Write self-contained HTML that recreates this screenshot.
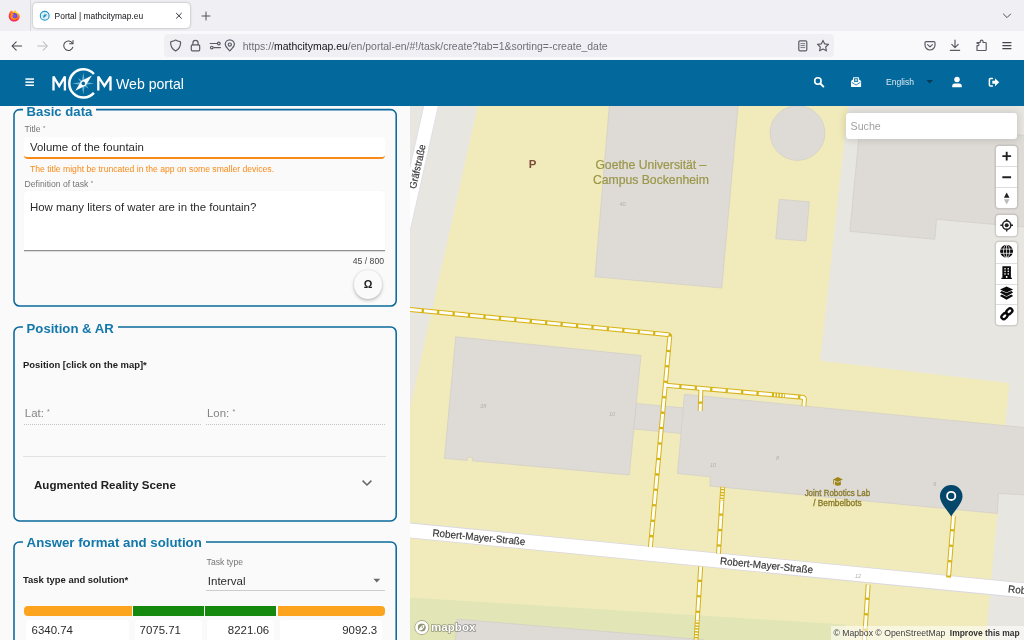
<!DOCTYPE html>
<html>
<head>
<meta charset="utf-8">
<title>Portal | mathcitymap.eu</title>
<style>
*{box-sizing:border-box;margin:0;padding:0}
html,body{width:1024px;height:640px;overflow:hidden;background:#fafafa;font-family:"Liberation Sans",sans-serif;color:#222}
.abs{position:absolute}
#tabbar{position:absolute;left:0;top:0;width:1024px;height:31px;background:#f0f0f4}
#tab{position:absolute;left:33px;top:3px;width:157.4px;height:25.1px;background:#fff;border-radius:4px;box-shadow:0 0 2.5px rgba(0,0,0,.35)}
#tabsep{position:absolute;left:30px;top:0;width:1px;height:31px;background:#d9d9de}
#tabtitle{position:absolute;left:54.6px;top:11px;font-size:8.45px;line-height:10px;color:#15141a;white-space:nowrap}
#toolbar{position:absolute;left:0;top:31px;width:1024px;height:29px;background:#f9f9fb}
#urlbar{position:absolute;left:164px;top:34px;width:670px;height:23px;background:#f0f0f4;border-radius:4px}
#urltext{position:absolute;left:242.7px;top:40.9px;font-size:10.46px;line-height:12px;color:#6f6f78;white-space:nowrap}
#urltext b{font-weight:normal;color:#15141a}
#header{position:absolute;left:0;top:60px;width:1024px;height:45.5px;background:#03699d}
#webportal{position:absolute;left:116px;top:75.8px;font-size:14.1px;line-height:17px;color:#fff;white-space:nowrap}
#english{position:absolute;left:886px;top:77px;font-size:8.55px;line-height:10px;color:#d9e8f0}
#panel{position:absolute;left:0;top:105.5px;width:410px;height:534.5px;background:#fafafa;overflow:hidden}
#map{position:absolute;left:409.5px;top:105.5px;width:614.5px;height:534.5px;background:#e8e6e1;overflow:hidden}
.fs{position:absolute;border:1.6px solid #0b6a9c;border-radius:6px}
.lg{position:absolute;background:#fafafa;color:#1277a9;font-weight:bold;font-size:13.15px;line-height:16px;white-space:nowrap;padding:0 4px}
.lbl{position:absolute;font-size:8.65px;line-height:10px;color:#757575;white-space:nowrap}
.blbl{position:absolute;font-size:9.45px;line-height:11px;font-weight:bold;color:#212121;white-space:nowrap}
.inp{position:absolute;font-size:11.45px;line-height:14px;color:#2b2b2b;white-space:nowrap}
.ctrl{position:absolute;background:#fff;border-radius:3px;box-shadow:0 0 0 1.5px rgba(0,0,0,.1)}
</style>
</head>
<body>
<div id="root" style="position:absolute;left:0;top:0;width:1024px;height:640px;will-change:transform">
<!-- ===== browser chrome ===== -->
<div id="tabbar"></div>
<div id="tabsep"></div>
<div id="tab"></div>
<div id="tabtitle">Portal | mathcitymap.eu</div>
<div id="toolbar"></div>
<div id="urlbar"></div>
<div id="urltext">https://<b>mathcitymap.eu</b>/en/portal-en/#!/task/create?tab=1&amp;sorting=-create_date</div>
<svg class="abs" style="left:0;top:0" width="1024" height="60" viewBox="0 0 1024 60" fill="none" stroke="#5b5b66" stroke-width="1.2" stroke-linecap="round" stroke-linejoin="round">
<!-- firefox logo -->
<defs>
<radialGradient id="ffg" cx="0.7" cy="0.15" r="1"><stop offset="0" stop-color="#ffe226"/><stop offset=".35" stop-color="#ff9a1f"/><stop offset=".7" stop-color="#ff3647"/><stop offset="1" stop-color="#e31587"/></radialGradient>
<radialGradient id="ffp" cx="0.5" cy="0.5" r="0.5"><stop offset="0" stop-color="#9059ff"/><stop offset="1" stop-color="#5b3bd6"/></radialGradient>
</defs>
<g stroke="none">
<path d="M9.2,13.6 C9.6,11.6 10.9,10.6 12,10.4 C12.2,11 12.6,11.5 13.2,11.9 C13.8,10.9 15,10 16.2,10.6 C15.8,11.2 16.2,11.8 16.8,12.2 C18.8,13 19.9,14.8 19.8,16.6 C19.6,19.6 17.2,21.6 14.3,21.6 C11.2,21.6 8.7,19.2 8.7,16.2 C8.7,15.2 8.9,14.4 9.2,13.6 Z" fill="url(#ffg)"/>
<circle cx="14.5" cy="16" r="2.9" fill="url(#ffp)"/>
<path d="M11.2,14.2 C12.2,13.6 13.6,13.8 14.4,14.6 C13.4,14.6 12.6,15.2 12.6,16.2 C12.6,17.4 13.6,18.2 14.8,18.2 C16,18.2 17,17.4 17.2,16.4 C17.4,18.6 15.8,20 14.2,20 C12,20 10.4,18.4 10.4,16.4 C10.4,15.6 10.7,14.8 11.2,14.2 Z" fill="#ff980e" opacity=".9"/>
</g>
<!-- tab favicon -->
<circle cx="44.7" cy="15.8" r="4.4" stroke="#2196c4" stroke-width="1.1" fill="#e3f3f9"/>
<path d="M44.7,12.4 L45.3,15.2 L48.1,15.8 L45.3,16.4 L44.7,19.2 L44.1,16.4 L41.3,15.8 L44.1,15.2 Z" fill="#8fcfe6" stroke="none"/>
<path d="M42.6,17.9 L44,15.1 L46.8,13.7 L45.4,16.5 Z" fill="#1b8fc0" stroke="none"/>
<!-- tab close -->
<path d="M176.4,13.3 L181.4,18.3 M181.4,13.3 L176.4,18.3" stroke="#2b2a33" stroke-width=".95"/>
<!-- new tab + -->
<path d="M202,16 L210,16 M206,12 L206,20" stroke="#4a4a55" stroke-width=".95"/>
<!-- list all tabs chevron -->
<path d="M1003.4,14 L1007,17.6 L1010.6,14" stroke="#4a4a55" stroke-width="1"/>
<!-- back -->
<path d="M21.6,46 L12.2,46 M16.2,41.8 L12,46 L16.2,50.2" stroke="#45454f" stroke-width="1.05"/>
<!-- forward (disabled) -->
<path d="M37.8,46 L47.2,46 M43.2,41.8 L47.4,46 L43.2,50.2" stroke="#bdbdc4" stroke-width="1.05"/>
<!-- reload -->
<path d="M72.4,43.2 A4.7,4.7 0 1 0 72.9,47.2" stroke="#45454f" stroke-width="1.05"/>
<path d="M73,40.4 L73,43.8 L69.6,43.8" stroke="#45454f" stroke-width="1.05" fill="none"/>
<!-- shield -->
<path d="M175.6,40.1 C174.2,41 172.6,41.5 171.2,41.7 Q170.6,41.8 170.6,42.5 C170.6,46.6 172.2,49.3 175.6,50.9 C179,49.3 180.6,46.6 180.6,42.5 Q180.6,41.8 180,41.7 C178.6,41.5 177,41 175.6,40.1 Z"/>
<!-- lock -->
<rect x="191.3" y="44.9" width="8.4" height="5.9" rx="1"/>
<path d="M192.9,44.8 L192.9,43 A2.6,2.6 0 0 1 198.1,43 L198.1,44.8"/>
<!-- permissions -->
<path d="M210.2,43.5 L216.8,43.5 M213.8,47.6 L220.4,47.6"/>
<circle cx="218.8" cy="43.5" r="1.35"/>
<circle cx="211.8" cy="47.6" r="1.35"/>
<!-- location -->
<path d="M229.8,50.9 C227.6,48.2 225.2,46.4 225.2,44.4 A4.6,4.6 0 0 1 234.4,44.4 C234.4,46.4 232,48.2 229.8,50.9 Z"/>
<circle cx="229.8" cy="44.6" r="1.6"/>
<!-- reader -->
<rect x="798.8" y="40.9" width="8" height="10" rx="1.2"/>
<path d="M800.8,43.6 L804.8,43.6 M800.8,45.6 L804.8,45.6 M800.8,47.6 L804.8,47.6" stroke-width=".8"/>
<!-- star -->
<path d="M823,40.4 L824.7,43.9 L828.5,44.4 L825.7,47 L826.4,50.8 L823,49 L819.6,50.8 L820.3,47 L817.5,44.4 L821.3,43.9 Z"/>
<!-- pocket -->
<path d="M926.2,41.6 L933.8,41.6 Q935,41.6 935,42.8 L935,45 A5,5 0 0 1 925,45 L925,42.8 Q925,41.6 926.2,41.6 Z"/>
<path d="M927.6,44.6 L930,46.9 L932.4,44.6"/>
<!-- download -->
<path d="M955,40 L955,47.4 M951.8,44.4 L955,47.6 L958.2,44.4 M950.4,50.4 L959.6,50.4"/>
<!-- extension -->
<path d="M977,50.8 L977,46 L978.2,46 A1.3,1.3 0 0 0 978.2,43.6 L977,43.6 L977,42.8 L980.2,42.8 L980.2,41.8 A1.4,1.4 0 0 1 983,41.8 L983,42.8 L985.4,42.8 Q986.2,42.8 986.2,43.6 L986.2,50 Q986.2,50.8 985.4,50.8 Z" transform="translate(0,-.3)"/>
<!-- menu -->
<path d="M1002.8,42.6 L1011,42.6 M1002.8,45.6 L1011,45.6 M1002.8,48.6 L1011,48.6" stroke="#45454f"/>
</svg>

<!-- ===== app header ===== -->
<div id="header"></div>
<div id="webportal">Web portal</div>
<div id="english">English</div>
<svg class="abs" style="left:0;top:60px" width="1024" height="46" viewBox="0 60 1024 46" fill="#fff">
<!-- hamburger -->
<rect x="25.4" y="78.3" width="8.6" height="1.5"/><rect x="25.4" y="81.4" width="8.6" height="1.5"/><rect x="25.4" y="84.5" width="8.6" height="1.5"/>
<!-- MCM logo -->
<g fill="none" stroke="#fff">
<path d="M53.5,90.4 L53.5,76.6 L59.2,86 L64.9,76.6 L64.9,90.4" stroke-width="2.3" stroke-linejoin="miter" stroke-miterlimit="2.2"/>
<path d="M98.3,90.4 L98.3,76.6 L104.4,86 L110.5,76.6 L110.5,90.4" stroke-width="2.3" stroke-linejoin="miter" stroke-miterlimit="2.2"/>
<path d="M93.9,74 A14.1,14.1 0 1 0 93.9,92.8" stroke-width="2.5"/>
</g>
<!-- compass star -->
<g transform="translate(83.3,83.4)">
<g fill="#63b3d6">
<polygon points="0,-11 1.5,-1.5 11,0 1.5,1.5 0,11 -1.5,1.5 -11,0 -1.5,-1.5"/>
<polygon points="5.4,-5.4 2,0 5.4,5.4 0,2 -5.4,5.4 -2,0 -5.4,-5.4 0,-2"/>
</g>
<polygon points="-8,7.4 -2,-2.4 8.6,-8 2.4,2" fill="#fff"/>
<circle r="1.8" fill="#03699d"/>
</g>
<!-- search -->
<circle cx="817.9" cy="81" r="3.2" fill="none" stroke="#fff" stroke-width="1.6"/>
<path d="M820.3,83.5 L823.4,86.6" stroke="#fff" stroke-width="1.9" stroke-linecap="round"/>
<!-- envelope-open-text -->
<path d="M851,81 L853,79.4 L853,78 Q853,77.2 853.8,77.2 L858.3,77.2 Q859.1,77.2 859.1,78 L859.1,79.4 L861.1,81 L861.1,86.2 Q861.1,87.1 860.2,87.1 L851.9,87.1 Q851,87.1 851,86.2 Z" fill="#fff"/>
<rect x="854" y="78.3" width="4.1" height="3.6" fill="#03699d"/>
<path d="M851.6,82.2 L856.05,85 L860.5,82.2" fill="none" stroke="#03699d" stroke-width=".8"/>
<rect x="854.7" y="79" width="2.7" height="2.2" fill="#9cc6dc"/>
<!-- dropdown arrow -->
<path d="M926.4,80 L933,80 L929.7,83.4 Z" fill="#063a59"/>
<!-- user -->
<circle cx="957" cy="79.6" r="2.75"/>
<path d="M952.2,87.2 L952.2,86 Q952.2,83.4 954.8,83.4 L959.2,83.4 Q961.8,83.4 961.8,86 L961.8,87.2 Z"/>
<!-- sign out -->
<path d="M992.4,78.6 L990.4,78.6 Q989.4,78.6 989.4,79.6 L989.4,84.9 Q989.4,85.9 990.4,85.9 L992.4,85.9" fill="none" stroke="#fff" stroke-width="1.5" stroke-linecap="round"/>
<path d="M992.3,80.7 L995,80.7 L995,78.3 L999.2,82.25 L995,86.2 L995,83.8 L992.3,83.8 Z"/>
</svg>

<!-- ===== left panel ===== -->
<div id="panel">
<div class="abs" style="left:0;top:-105.5px;width:410px;height:640px">
<!-- fieldset borders -->
<svg class="abs" style="left:0;top:0" width="410" height="640" viewBox="0 0 410 640" fill="none" stroke="#0b6a9c" stroke-width="1.55">
<rect x="14" y="109.6" width="382.2" height="196.4" rx="5.5"/>
<rect x="14" y="327" width="382.2" height="193.9" rx="5.5"/>
<rect x="14" y="541.9" width="382.2" height="140" rx="5.5"/>
</svg>
<!-- fieldset 1 -->
<div class="lg" style="left:22.6px;top:103.6px">Basic data</div>
<div class="lbl" style="left:24.6px;top:124.3px">Title <span style="font-size:6px;position:relative;top:-2px">*</span></div>
<div class="abs" style="left:24px;top:137px;width:361px;height:21.6px;background:#fff;border-bottom:2px solid #fa8a17;border-radius:3px 3px 4px 4px"></div>
<div class="inp" style="left:30px;top:140.2px">Volume of the fountain</div>
<div class="abs" style="left:30px;top:163.7px;font-size:8.62px;line-height:10px;color:#fa8a17;white-space:nowrap">The title might be truncated in the app on some smaller devices.</div>
<div class="lbl" style="left:24.6px;top:178.8px">Definition of task <span style="font-size:6px;position:relative;top:-2px">*</span></div>
<div class="abs" style="left:24px;top:191px;width:361px;height:59.5px;background:#fff;border-bottom:1px solid #8f8f8f;border-radius:3px 3px 0 0;box-shadow:0 .6px .8px rgba(0,0,0,.12)"></div>
<div class="inp" style="left:30px;top:200px">How many liters of water are in the fountain?</div>
<div class="abs" style="right:26px;top:256px;font-size:8.65px;line-height:10px;color:#444;white-space:nowrap">45 / 800</div>
<div class="abs" style="left:353.6px;top:270px;width:28.8px;height:28.8px;border-radius:50%;background:#fafafa;box-shadow:0 1.6px 3.6px rgba(0,0,0,.26),0 0 1.5px rgba(0,0,0,.12)"></div>
<div class="abs" style="left:353.6px;top:278.2px;width:28.8px;text-align:center;font-size:10.8px;line-height:12px;font-weight:bold;color:#222">Ω</div>
<!-- fieldset 2 -->
<div class="lg" style="left:22.6px;top:320.9px">Position &amp; AR</div>
<div class="blbl" style="left:23px;top:358.9px">Position [click on the map]*</div>
<div class="abs" style="left:24.8px;top:405.8px;font-size:11.45px;line-height:14px;color:#858585;white-space:nowrap">Lat: <span style="font-size:7px;position:relative;top:-2.5px">*</span></div>
<div class="abs" style="left:207px;top:405.8px;font-size:11.45px;line-height:14px;color:#858585;white-space:nowrap">Lon: <span style="font-size:7px;position:relative;top:-2.5px">*</span></div>
<div class="abs" style="left:24px;top:423.6px;width:177px;height:0;border-top:1px dotted #c6c6c6"></div>
<div class="abs" style="left:206px;top:423.6px;width:178.5px;height:0;border-top:1px dotted #c6c6c6"></div>
<div class="abs" style="left:23px;top:455.6px;width:363px;height:1px;background:#e2e2e2"></div>
<div class="abs" style="left:34px;top:478px;font-size:11.56px;line-height:14px;font-weight:bold;color:#212121;white-space:nowrap">Augmented Reality Scene</div>
<svg class="abs" style="left:360px;top:477px" width="14" height="12" viewBox="0 0 14 12"><path d="M2.6,3.6 L7,8 L11.4,3.6" fill="none" stroke="#666" stroke-width="1.5"/></svg>
<!-- fieldset 3 -->
<div class="lg" style="left:22.6px;top:534.9px;font-size:13.25px">Answer format and solution</div>
<div class="lbl" style="left:206.6px;top:557.2px">Task type</div>
<div class="blbl" style="left:23px;top:574.4px">Task type and solution*</div>
<div class="abs" style="left:207.8px;top:574.4px;font-size:11.5px;line-height:14px;color:#2b2b2b">Interval</div>
<svg class="abs" style="left:371px;top:577px" width="12" height="8" viewBox="0 0 12 8"><path d="M2.4,1.8 L9.2,1.8 L5.8,5.4 Z" fill="#6a6a6a"/></svg>
<div class="abs" style="left:206px;top:590px;width:179px;height:1px;background:#cdcdcd"></div>
<!-- interval bar -->
<div class="abs" style="left:24px;top:606.4px;width:107.6px;height:10px;background:#fda41e;border-radius:4px 0 0 4px"></div>
<div class="abs" style="left:133px;top:606.4px;width:70.6px;height:10px;background:#15880e"></div>
<div class="abs" style="left:205.2px;top:606.4px;width:71px;height:10px;background:#15880e"></div>
<div class="abs" style="left:277.8px;top:606.4px;width:107.4px;height:10px;background:#fda41e;border-radius:0 4px 4px 0"></div>
<div class="abs" style="left:26px;top:620px;width:103px;height:22px;background:#fff;border-radius:3px 3px 0 0"></div>
<div class="abs" style="left:135px;top:620px;width:66.5px;height:22px;background:#fff;border-radius:3px 3px 0 0"></div>
<div class="abs" style="left:207px;top:620px;width:67px;height:22px;background:#fff;border-radius:3px 3px 0 0"></div>
<div class="abs" style="left:280px;top:620px;width:101.5px;height:22px;background:#fff;border-radius:3px 3px 0 0"></div>
<div class="inp" style="left:31.6px;top:623.4px">6340.74</div>
<div class="inp" style="left:139.6px;top:623.4px">7075.71</div>
<div class="inp" style="right:140.8px;top:623.4px">8221.06</div>
<div class="inp" style="right:32.8px;top:623.4px">9092.3</div>
</div>

</div>
<!-- ===== map ===== -->
<div id="map">
<svg class="abs" style="left:0;top:0" width="614.5" height="534.5" viewBox="409.5 105.5 614.5 534.5" font-family="Liberation Sans, sans-serif">
<defs>
<style>
.bld{fill:#dedbd7;stroke:#d0cdc9;stroke-width:.7}
.pc{fill:none;stroke:#d6b317;stroke-width:4.9;stroke-linejoin:round;stroke-linecap:butt}
.pd{fill:none;stroke:#fffef6;stroke-width:2.9;stroke-dasharray:13.2 2.3;stroke-linejoin:round}
.ps{fill:none;stroke:#fffef6;stroke-width:3;stroke-dasharray:1.4 1.5}
.hn{font-size:5.6px;font-style:italic;fill:#b3b0ac;text-anchor:middle}
.rlh{font-size:10.2px;fill:#fff;stroke:#fff;stroke-width:1.8;stroke-linejoin:round}
.rl{font-size:10.2px;fill:#383838;stroke:#383838;stroke-width:.18}
.poi{fill:#897a28;text-anchor:middle;font-size:8.8px;stroke:#897a28;stroke-width:.32}
.uni{fill:#9a9648;text-anchor:middle;font-size:12.4px;stroke:#9a9648;stroke-width:.2}
</style>
</defs>
<!-- land -->
<rect x="409" y="105" width="615" height="535" fill="#e8e6e1"/>
<!-- campus (yellow) -->
<polygon points="477.3,105 847.6,105 819.7,360.3 1008.8,382.4 985.2,640 409,640 409,410" fill="#f1ebbb"/>
<!-- green -->
<polygon points="409,597 845.5,624 844,640 409,640" fill="#e2e6b6"/>
<!-- Graefstrasse -->
<polygon points="423.4,105 437.9,105 409,233 409,169" fill="#fff" stroke="#dcdbe6" stroke-width=".8"/>
<!-- buildings -->
<polygon class="bld" points="608.8,105 737.6,105 721.3,287.5 594.5,276.3"/>
<circle class="bld" cx="797" cy="132.5" r="27.4"/>
<polygon class="bld" points="778.8,198.8 808.8,201.3 805.5,240.5 775.3,238.3"/>
<polygon class="bld" points="860,120 1024,135 1024,226.5 936,218.8 934.3,238.8 849.3,230.8"/>
<polygon class="bld" points="635.5,403 684,407.5 681.5,433 633,428.5"/>
<polygon class="bld" points="455.2,336.3 640.5,355 628.8,474.5 471.6,460.3 471.9,457 467.2,456.6 466.9,459.9 443.9,457.9"/>
<polygon class="bld" points="683.9,393.8 1030,427.6 1030,494.8 998,493 996.8,513 709.3,485.5 710,476.3 677,473"/>
<polygon class="bld" points="456.8,618.7 704,639.3 700,650 454,650"/>
<!-- road -->
<line x1="400" y1="529.02" x2="1034" y2="590.9" stroke="#d9d7e2" stroke-width="15.6"/>
<line x1="400" y1="529.02" x2="1034" y2="590.9" stroke="#fff" stroke-width="14"/>
<!-- paths -->
<g>
<path class="pc" d="M408,308.8 L667.2,334.1 Q669.4,334.4 669.2,336.6 L649.9,546.5"/>
<path class="pc" d="M665.6,384.8 L801.9,396.8 Q804.1,397.1 803.9,399.3 L803.4,405.6"/>
<path class="pc" d="M700.4,387.8 L699.7,410.5"/>
<path class="pc" d="M722.2,486.4 L718,553.2"/>
<path class="pc" d="M953,515.5 L948,577"/>
<path class="pc" d="M700.2,566 L695.4,642"/>
<path class="pc" d="M867.7,584 L863.8,642"/>
<path class="pd" d="M408,308.8 L667.2,334.1 Q669.4,334.4 669.2,336.6 L649.9,546.5"/>
<path class="pd" d="M665.6,384.8 L773.2,394.3 M784.4,395.3 L801.9,396.8 Q804.1,397.1 803.9,399.3 L803.4,405.6" />
<path class="ps" d="M773.6,394.3 L784.2,395.3"/>
<path class="pd" d="M700.4,387.8 L699.7,410.5"/>
<path class="ps" d="M722.2,487 L721.4,499.5"/>
<path class="pd" d="M721.4,499.8 L718,553.2"/>
<path class="pd" d="M953,515.5 L948,577"/>
<path class="pd" d="M700.2,566 L696.8,620"/>
<path class="ps" d="M696.8,620.5 L695.4,642"/>
<path class="pd" d="M867.7,584 L863.8,642"/>
</g>
<!-- road casing over path ends -->
<!-- house numbers -->
<text class="hn" x="622" y="205">40</text>
<text class="hn" x="482.7" y="407">38</text>
<text class="hn" x="611.6" y="415">10</text>
<text class="hn" x="712.6" y="466.5">10</text>
<text class="hn" x="777" y="459.5">8</text>
<text class="hn" x="934.3" y="485">6</text>
<text class="hn" x="857.6" y="577">12</text>
<!-- labels -->
<text x="532" y="167.6" font-size="11.4" font-weight="bold" fill="#7c4a3b" text-anchor="middle">P</text>
<text class="uni" x="650.4" y="168" textLength="111" lengthAdjust="spacingAndGlyphs">Goethe Universität –</text>
<text class="uni" x="650.4" y="183.6" textLength="116" lengthAdjust="spacingAndGlyphs">Campus Bockenheim</text>
<text class="poi" x="836.9" y="495" textLength="65.5" lengthAdjust="spacingAndGlyphs">Joint Robotics Lab</text>
<text class="poi" x="836.9" y="505.2" textLength="48.5" lengthAdjust="spacingAndGlyphs">/ Bembelbots</text>
<!-- graduation cap -->
<g transform="translate(837.4,481.2)" fill="#9e8718">
<polygon points="-4.9,-2.2 0,-4.6 4.9,-2.2 0,0.2"/>
<path d="M-3,-0.4 L0,1.1 L3,-0.4 L3,3.2 Q0,4.8 -3,3.2 Z"/>
<rect x="-4.7" y="-2" width=".8" height="4.6"/>
</g>
<g class="rlh">
<text transform="translate(478.1,540.2) rotate(5.57)" text-anchor="middle" textLength="93.4" lengthAdjust="spacingAndGlyphs">Robert-Mayer-Straße</text>
<text transform="translate(765.7,568.3) rotate(5.57)" text-anchor="middle" textLength="93.4" lengthAdjust="spacingAndGlyphs">Robert-Mayer-Straße</text>
<text transform="translate(1007.3,591.8) rotate(5.57)" textLength="93.4" lengthAdjust="spacingAndGlyphs">Robert-Mayer-Straße</text>
<text transform="translate(420.3,166.8) rotate(-77.2)" text-anchor="middle" textLength="45" lengthAdjust="spacingAndGlyphs">Gräfstraße</text>
</g>
<g class="rl">
<text transform="translate(478.1,540.2) rotate(5.57)" text-anchor="middle" textLength="93.4" lengthAdjust="spacingAndGlyphs">Robert-Mayer-Straße</text>
<text transform="translate(765.7,568.3) rotate(5.57)" text-anchor="middle" textLength="93.4" lengthAdjust="spacingAndGlyphs">Robert-Mayer-Straße</text>
<text transform="translate(1007.3,591.8) rotate(5.57)" textLength="93.4" lengthAdjust="spacingAndGlyphs">Robert-Mayer-Straße</text>
<text transform="translate(420.3,166.8) rotate(-77.2)" text-anchor="middle" textLength="45" lengthAdjust="spacingAndGlyphs">Gräfstraße</text>
</g>
<!-- marker -->
<g transform="translate(950.7,-.5)">
<path d="M0,516.4 C-3.2,510.6 -11.3,503.4 -11.3,496.2 A11.3,11.3 0 0 1 11.3,496.2 C11.3,503.4 3.2,510.6 0,516.4 Z" fill="#04476b"/>
<circle cx="0" cy="495.9" r="4.1" fill="#04476b" stroke="#fff" stroke-width="1.8"/>
</g>
</svg>

</div>
<!-- search box -->
<div class="abs" style="left:846px;top:113px;width:171.3px;height:25.8px;background:#fff;border-radius:3px;box-shadow:0 0 7px 1.5px rgba(0,0,0,.12)"></div>
<div class="abs" style="left:850.6px;top:120.1px;font-size:10.65px;line-height:13px;color:#a2a2a2">Suche</div>
<!-- zoom / compass -->
<div class="ctrl" style="left:996px;top:145.6px;width:21.4px;height:62.4px"></div>
<div class="abs" style="left:996px;top:166.2px;width:21.4px;height:.8px;background:#ddd"></div>
<div class="abs" style="left:996px;top:186.9px;width:21.4px;height:.8px;background:#ddd"></div>
<!-- geolocate -->
<div class="ctrl" style="left:996px;top:214.7px;width:21.4px;height:20.9px"></div>
<!-- custom group -->
<div class="ctrl" style="left:996px;top:242px;width:21.4px;height:83px"></div>
<div class="abs" style="left:996px;top:262.8px;width:21.4px;height:.8px;background:#ddd"></div>
<div class="abs" style="left:996px;top:283.8px;width:21.4px;height:.8px;background:#ddd"></div>
<div class="abs" style="left:996px;top:304.2px;width:21.4px;height:.8px;background:#ddd"></div>
<svg class="abs" style="left:990px;top:140px" width="34" height="190" viewBox="990 140 34 190">
<g fill="#222">
<rect x="1002.3" y="155.15" width="8.8" height="1.9" rx=".3"/>
<rect x="1005.75" y="151.7" width="1.9" height="8.8" rx=".3"/>
<rect x="1002.3" y="176.25" width="8.8" height="1.9" rx=".3"/>
<polygon points="1006.7,192.4 1009.5,197.8 1003.9,197.8"/>
<polygon points="1006.7,204.6 1009.5,199.2 1003.9,199.2" fill="#bbb"/>
</g>
<!-- geolocate -->
<g fill="none" stroke="#222">
<circle cx="1006.7" cy="225.2" r="4.1" stroke-width="1.5"/>
<path d="M1006.7,218.9 L1006.7,221 M1006.7,229.4 L1006.7,231.5 M1000.4,225.2 L1002.5,225.2 M1010.9,225.2 L1013,225.2" stroke-width="1.5"/>
</g>
<circle cx="1006.7" cy="225.2" r="2" fill="#222"/>
<!-- globe -->
<g>
<circle cx="1006.6" cy="251.2" r="6.4" fill="#0a0a0a"/>
<g fill="none" stroke="#fff" stroke-width=".75">
<ellipse cx="1006.6" cy="251.2" rx="3.1" ry="6.4"/>
<path d="M1006.6,244.6 L1006.6,257.8 M1000.2,249.1 L1013,249.1 M1000.2,253.3 L1013,253.3"/>
</g>
</g>
<!-- building -->
<g>
<path d="M1002.4,266.2 L1010.9,266.2 L1010.9,277.8 L1011.9,277.8 L1011.9,279 L1001.4,279 L1001.4,277.8 L1002.4,277.8 Z" fill="#0a0a0a"/>
<g fill="#fff">
<rect x="1004.4" y="268" width="1.3" height="1.5"/><rect x="1007.6" y="268" width="1.3" height="1.5"/>
<rect x="1004.4" y="270.6" width="1.3" height="1.5"/><rect x="1007.6" y="270.6" width="1.3" height="1.5"/>
<rect x="1004.4" y="273.2" width="1.3" height="1.5"/><rect x="1007.6" y="273.2" width="1.3" height="1.5"/>
<rect x="1005.9" y="276" width="1.5" height="1.9"/>
</g>
</g>
<!-- layers -->
<g fill="#0a0a0a">
<polygon points="1006.55,286.5 1013.1,289.55 1006.55,292.5 1000,289.55"/>
<path d="M1001.7,291.1 L1006.55,293.1 L1011.4,291.1 L1013.1,292.5 L1006.55,296.2 L1000,292.5 Z"/>
<path d="M1001.7,294.5 L1006.55,296.8 L1011.4,294.5 L1013.1,295.9 L1006.55,299.8 L1000,295.9 Z"/>
</g>
<!-- link -->
<g transform="translate(1006.9,313.75) rotate(-45)" fill="none" stroke="#0a0a0a" stroke-width="2.35">
<rect x="0.15" y="-2.3" width="6.6" height="4.6" rx="2.3"/>
<rect x="-6.75" y="-2.3" width="6.6" height="4.6" rx="2.3"/>
</g>
</svg>
<!-- mapbox logo -->
<svg class="abs" style="left:412px;top:616px" width="70" height="24" viewBox="412 616 70 24">
<circle cx="421.8" cy="627.5" r="6.9" fill="none" stroke="#000" stroke-opacity=".3" stroke-width="1"/>
<circle cx="421.8" cy="627.5" r="4.2" fill="#000" fill-opacity=".36"/>
<circle cx="421.8" cy="627.5" r="5.3" fill="none" stroke="#fff" stroke-width="2.5"/>
<path d="M418.8,630.6 C419,627.6 421.4,624.9 424.4,624.9 C424.7,628 422,630.4 418.8,630.6 Z" fill="#fff"/>
<circle cx="422.3" cy="627" r=".8" fill="#8e9076"/>
<text x="431" y="631.1" font-family="Liberation Sans, sans-serif" font-weight="bold" font-size="11.7" fill="#fff" stroke="#000" stroke-opacity=".36" stroke-width="1.6" paint-order="stroke" stroke-linejoin="round" textLength="44.4" lengthAdjust="spacingAndGlyphs">mapbox</text>
</svg>
<!-- attribution -->
<div class="abs" style="left:830.5px;top:626px;width:193.5px;height:14px;background:rgba(255,255,255,.55)"></div>
<div class="abs" style="left:833.4px;top:627.6px;font-size:8.67px;line-height:11px;color:#404040;white-space:nowrap;letter-spacing:0">© Mapbox © OpenStreetMap <b style="font-size:8.45px;color:#333;margin-left:2.2px">Improve this map</b></div>

</div>
</body>
</html>
